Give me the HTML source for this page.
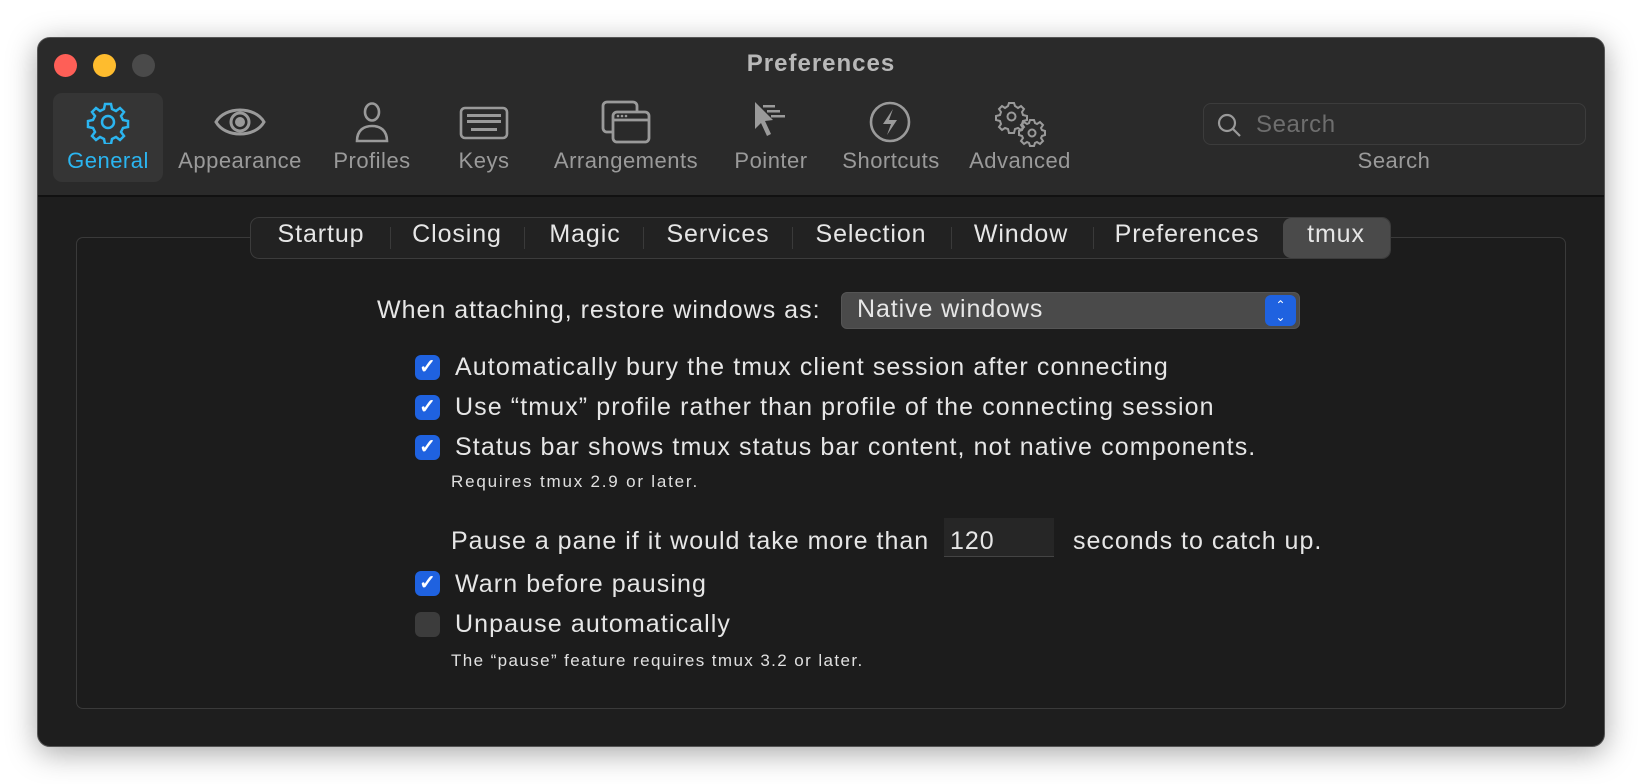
<!DOCTYPE html>
<html><head><meta charset="utf-8"><style>
*{margin:0;padding:0;box-sizing:border-box}
body{width:1642px;height:784px;background:#fff;font-family:"Liberation Sans",sans-serif;position:relative;overflow:hidden}
.win{position:absolute;left:37px;top:37px;width:1568px;height:710px;border-radius:13px;background:#1e1e1e;overflow:hidden;box-shadow:0 6px 30px rgba(0,0,0,.35);border:1px solid #555}
.tb{position:absolute;left:0;top:0;right:0;height:159px;background:#2a2a2a;border-bottom:2px solid #111}
.a{position:absolute}
.tl{position:absolute;top:16px;width:23px;height:23px;border-radius:50%}
.t{position:absolute;color:#e6e6e6;white-space:nowrap}
.lbl{position:absolute;top:110px;font-size:22px;letter-spacing:0.5px;color:#9a9a9a;transform:translateX(-50%);white-space:nowrap}
.ic{position:absolute;top:62px;transform:translateX(-50%)}
.tab{position:absolute;top:182px;font-size:25px;letter-spacing:0.9px;color:#e6e6e6;transform:translateX(-50%);white-space:nowrap}
.sep{position:absolute;top:189px;width:1px;height:22px;background:#3a3a3a}
.cb{position:absolute;left:377px;width:25px;height:25px;border-radius:6px;background:#1f62e0;color:#fff;font-size:20px;font-weight:bold;text-align:center;line-height:25px}
.row{position:absolute;left:417px;font-size:25px;letter-spacing:1.1px;color:#e6e6e6;white-space:nowrap}
.note{position:absolute;left:413px;font-size:17px;letter-spacing:1.4px;color:#e0e0e0;white-space:nowrap}
</style></head><body>
<div class="win">
<div class="tb">
<div class="tl" style="left:16px;background:#fe5f57"></div>
<div class="tl" style="left:55px;background:#febc2e"></div>
<div class="tl" style="left:94px;background:#4a4a4a"></div>
<div class="t" style="left:783px;top:12px;transform:translateX(-50%);font-size:24px;letter-spacing:1px;font-weight:bold;color:#b8b8b8">Preferences</div>
<div class="a" style="left:15px;top:55px;width:110px;height:89px;border-radius:9px;background:#353535"></div>
<svg class="ic" style="left:70px" width="44" height="44" viewBox="0 0 44 44" fill="none" stroke="#2bb5f0" stroke-width="2.5"><path d="M19 4h6l1 5 4 2 4-3 4 4-3 4 2 4 5 1v6l-5 1-2 4 3 4-4 4-4-3-4 2-1 5h-6l-1-5-4-2-4 3-4-4 3-4-2-4-5-1v-6l5-1 2-4-3-4 4-4 4 3 4-2z"/><circle cx="22" cy="22" r="6"/></svg>
<svg class="ic" style="left:202px" width="54" height="44" viewBox="0 0 54 44" fill="none" stroke="#9a9a9a" stroke-width="3"><path d="M3 22C12 6 42 6 51 22C42 38 12 38 3 22z"/><circle cx="27" cy="22" r="9"/><circle cx="27" cy="22" r="3.5" fill="#9a9a9a"/></svg>
<svg class="ic" style="left:334px" width="40" height="44" viewBox="0 0 40 44" fill="none" stroke="#9a9a9a" stroke-width="2.6"><ellipse cx="20" cy="12" rx="7" ry="8.5"/><path d="M5 41c0-10 6-15 15-15s15 5 15 15z"/></svg>
<svg class="ic" style="left:446px" width="52" height="44" viewBox="0 0 52 44" fill="none" stroke="#9a9a9a" stroke-width="2.6"><rect x="3" y="8" width="46" height="30" rx="4"/><g fill="#9a9a9a" stroke="none"><rect x="9" y="14" width="34" height="3"/><rect x="9" y="20" width="34" height="3"/><rect x="13" y="28" width="26" height="3"/></g></svg>
<svg class="ic" style="left:588px" width="54" height="44" viewBox="0 0 54 44" fill="none" stroke="#9a9a9a" stroke-width="2.8"><rect x="4" y="2" width="34" height="30" rx="4"/><rect x="14" y="12" width="36" height="30" rx="4" fill="#2a2a2a"/><path d="M14 20h36"/><g fill="#9a9a9a" stroke="none"><circle cx="19" cy="16" r="1.3"/><circle cx="23" cy="16" r="1.3"/><circle cx="27" cy="16" r="1.3"/></g></svg>
<svg class="ic" style="left:733px" width="44" height="46" viewBox="0 0 44 46" fill="#9a9a9a"><path d="M6 2l18 18-8 1 6 13-4 2-6-13-6 6z"/><rect x="14" y="5" width="12" height="2.5"/><rect x="18" y="10" width="13" height="2.5"/><rect x="22" y="15" width="14" height="2.5"/></svg>
<svg class="ic" style="left:852px" width="44" height="44" viewBox="0 0 44 44" fill="none" stroke="#9a9a9a" stroke-width="2.6"><circle cx="22" cy="22" r="19"/><path d="M25 9l-10 15h8l-4 11 10-15h-8z" fill="#9a9a9a" stroke="none"/></svg>
<svg class="ic" style="left:982px" width="56" height="48" viewBox="0 0 56 48" fill="none" stroke="#9a9a9a" stroke-width="2"><path d="M17 3h5l1 3 3 2 3-2 3 3-2 3 1 3 4 1v4l-4 1-1 3 2 3-3 3-3-2-3 1-1 4h-5l-1-4-3-1-3 2-3-3 2-3-1-3-4-1v-4l4-1 1-3-2-3 3-3 3 2 3-2z"/><circle cx="19.5" cy="16.5" r="4"/><path d="M38 20h4l1 3 2 1 3-2 3 3-2 3 1 2 3 1v4l-3 1-1 2 2 3-3 3-3-2-2 1-1 3h-4l-1-3-2-1-3 2-3-3 2-3-1-2-3-1v-4l3-1 1-2-2-3 3-3 3 2 2-1z"/><circle cx="40" cy="33" r="3.5"/></svg>
<div class="lbl" style="left:70px;color:#2bb5f0">General</div>
<div class="lbl" style="left:202px">Appearance</div>
<div class="lbl" style="left:334px">Profiles</div>
<div class="lbl" style="left:446px">Keys</div>
<div class="lbl" style="left:588px">Arrangements</div>
<div class="lbl" style="left:733px">Pointer</div>
<div class="lbl" style="left:853px">Shortcuts</div>
<div class="lbl" style="left:982px">Advanced</div>
<div class="a" style="left:1165px;top:65px;width:383px;height:42px;border:1px solid #3c3c3c;border-radius:8px;background:#2c2c2c"></div>
<svg class="a" style="left:1178px;top:74px" width="26" height="26" viewBox="0 0 26 26" fill="none" stroke="#9a9a9a" stroke-width="2.2"><circle cx="11" cy="11" r="8"/><path d="M17 17l7 7"/></svg>
<div class="t" style="left:1218px;top:73px;font-size:24px;letter-spacing:0.6px;color:#6e6e6e">Search</div>
<div class="lbl" style="left:1356px">Search</div>
</div>
<div class="a" style="left:38px;top:199px;width:1490px;height:472px;border:1px solid #3a3a3a;border-radius:7px;background:#1c1c1c"></div>
<div class="a" style="left:212px;top:179px;width:1141px;height:42px;border:1px solid #3c3c3c;border-radius:9px;background:#222"></div>
<div class="a" style="left:1245px;top:180px;width:107px;height:40px;border-radius:8px;background:#4a4a4a"></div>
<div class="tab" style="left:283px">Startup</div><div class="sep" style="left:352px"></div>
<div class="tab" style="left:419px">Closing</div><div class="sep" style="left:486px"></div>
<div class="tab" style="left:547px">Magic</div><div class="sep" style="left:605px"></div>
<div class="tab" style="left:680px">Services</div><div class="sep" style="left:754px"></div>
<div class="tab" style="left:833px">Selection</div><div class="sep" style="left:913px"></div>
<div class="tab" style="left:983px">Window</div><div class="sep" style="left:1055px"></div>
<div class="tab" style="left:1149px">Preferences</div>
<div class="tab" style="left:1298px">tmux</div>
<div class="row" style="left:339px;top:258px;letter-spacing:1px">When attaching, restore windows as:</div>
<div class="a" style="left:803px;top:254px;width:459px;height:37px;border-radius:6px;background:#4a4a4a;border:1px solid #555"></div>
<div class="t" style="left:819px;top:257px;font-size:25px;letter-spacing:0.9px">Native windows</div>
<div class="a" style="left:1227px;top:257px;width:31px;height:31px;border-radius:6px;background:#1f62e0;color:#fff;font-size:12px;text-align:center;line-height:12px;padding-top:4px">&#8963;<br>&#8964;</div>
<div class="cb" style="top:317px">✓</div><div class="row" style="top:315px">Automatically bury the tmux client session after connecting</div>
<div class="cb" style="top:357px">✓</div><div class="row" style="top:355px">Use “tmux” profile rather than profile of the connecting session</div>
<div class="cb" style="top:397px">✓</div><div class="row" style="top:395px">Status bar shows tmux status bar content, not native components.</div>
<div class="note" style="top:434px;letter-spacing:1.8px">Requires tmux 2.9 or later.</div>
<div class="row" style="left:413px;top:489px;letter-spacing:1px">Pause a pane if it would take more than</div>
<div class="a" style="left:906px;top:480px;width:110px;height:39px;background:#262626;border-bottom:1px solid #444"></div>
<div class="t" style="left:912px;top:489px;font-size:25px;letter-spacing:1px">120</div>
<div class="row" style="left:1035px;top:489px;letter-spacing:1px">seconds to catch up.</div>
<div class="cb" style="top:533px">✓</div><div class="row" style="top:532px">Warn before pausing</div>
<div class="cb" style="top:574px;background:#3c3c3c"></div><div class="row" style="top:572px">Unpause automatically</div>
<div class="note" style="top:613px">The “pause” feature requires tmux 3.2 or later.</div>
</div>
</body></html>
